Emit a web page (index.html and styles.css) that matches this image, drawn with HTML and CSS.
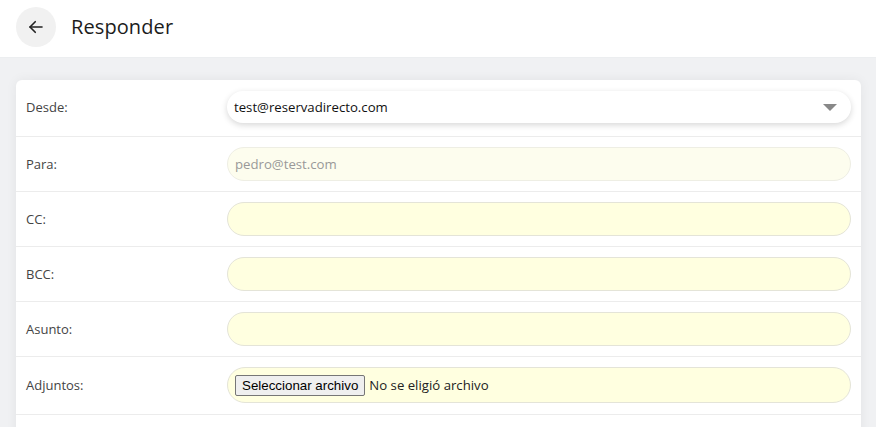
FILE: index.html
```html
<!DOCTYPE html>
<html lang="es">
<head>
<meta charset="utf-8">
<title>Responder</title>
<link rel="stylesheet" href="styles.css">
</head>
<body>
<header class="topbar">
  <button class="back" type="button" aria-label="Volver">
    <svg width="18" height="18" viewBox="0 0 24 24" fill="none" stroke="#222" stroke-width="2.2" stroke-linecap="round" stroke-linejoin="round"><path d="M20 12H4"/><path d="M11 5l-7 7 7 7"/></svg>
  </button>
  <h1 class="title">Responder</h1>
</header>
<main class="page">
  <form class="card">
    <div class="row row-first">
      <label class="label">Desde:</label>
      <div class="select">
        <span class="select-text">test@reservadirecto.com</span>
        <span class="caret"></span>
      </div>
    </div>
    <div class="row">
      <label class="label">Para:</label>
      <input class="field field-disabled" type="text" value="pedro@test.com" disabled>
    </div>
    <div class="row">
      <label class="label">CC:</label>
      <input class="field" type="text">
    </div>
    <div class="row">
      <label class="label">BCC:</label>
      <input class="field" type="text">
    </div>
    <div class="row">
      <label class="label">Asunto:</label>
      <input class="field" type="text">
    </div>
    <div class="row row-file">
      <label class="label">Adjuntos:</label>
      <div class="field file-field">
        <span class="file-btn">Seleccionar archivo</span>
        <span class="file-text">No se eligió archivo</span>
      </div>
    </div>
    <div class="row row-last"></div>
  </form>
</main>
</body>
</html>
```

FILE: styles.css
```css
* { box-sizing: border-box; }
html, body { margin: 0; height: 100%; }
body {
  font-family: "Open Sans", "Noto Sans", sans-serif;
  background: #f0f1f3;
  color: #222;
  overflow: hidden;
}
.topbar {
  height: 58px;
  background: #fff;
  display: flex;
  align-items: flex-start;
  padding: 7px 16px 0;
  gap: 15px;
  border-bottom: 1px solid #eceef0;
}
.back {
  width: 40px;
  height: 40px;
  border-radius: 50%;
  border: none;
  background: #f1f1f1;
  display: flex;
  align-items: center;
  justify-content: center;
  padding: 0;
}
.title {
  margin: 0;
  font-size: 20px;
  line-height: 40px;
  font-weight: 400;
  color: #1c1c1c;
  letter-spacing: 0.1px;
}
.page {
  padding: 22px 15px 0 16px;
}
.card {
  background: #fff;
  border-radius: 6px 6px 0 0;
  box-shadow: 0 0 12px rgba(0,0,0,0.06);
  margin: 0;
}
.row {
  display: flex;
  align-items: center;
  padding: 10px 10px;
  border-bottom: 1px solid #ececec;
}
.row-first { padding: 11px 10px 13px; }
.row-file { padding: 10px 10px 11px; }
.row-last { border-bottom: none; height: 30px; }
.label {
  width: 201px;
  flex: none;
  font-size: 13px;
  color: #444;
}
.select {
  flex: 1;
  height: 32px;
  border-radius: 16px;
  background: #fff;
  box-shadow: 0 2px 6px rgba(0,0,0,0.16);
  display: flex;
  align-items: center;
  padding: 0 14px 0 7px;
  font-size: 13.2px;
  color: #111;
}
.select-text { flex: 1; }
.caret {
  width: 0; height: 0;
  border-left: 7px solid transparent;
  border-right: 7px solid transparent;
  border-top: 7px solid #888;
}
.field {
  flex: 1;
  height: 34px;
  border-radius: 17px;
  border: 1px solid #e4e4d8;
  background: #ffffe0;
  padding: 0 7px;
  font-family: inherit;
  font-size: 13.2px;
  color: #111;
  outline: none;
}
.field-disabled {
  background: #fdfdee;
  border-color: #eeeee4;
  color: #999;
}
.file-field {
  height: 36px;
  border-radius: 18px;
  display: flex;
  align-items: center;
  gap: 4px;
}
.file-btn {
  font-family: "Liberation Sans", Arial, sans-serif;
  font-size: 13.333px;
  color: #000;
  background: #efefef;
  border: 1px solid #767676;
  border-radius: 2px;
  padding: 2px 6px;
  line-height: 15px;
  height: 21px;
}
.file-text {
  font-size: 13.2px;
  color: #222;
}
```
